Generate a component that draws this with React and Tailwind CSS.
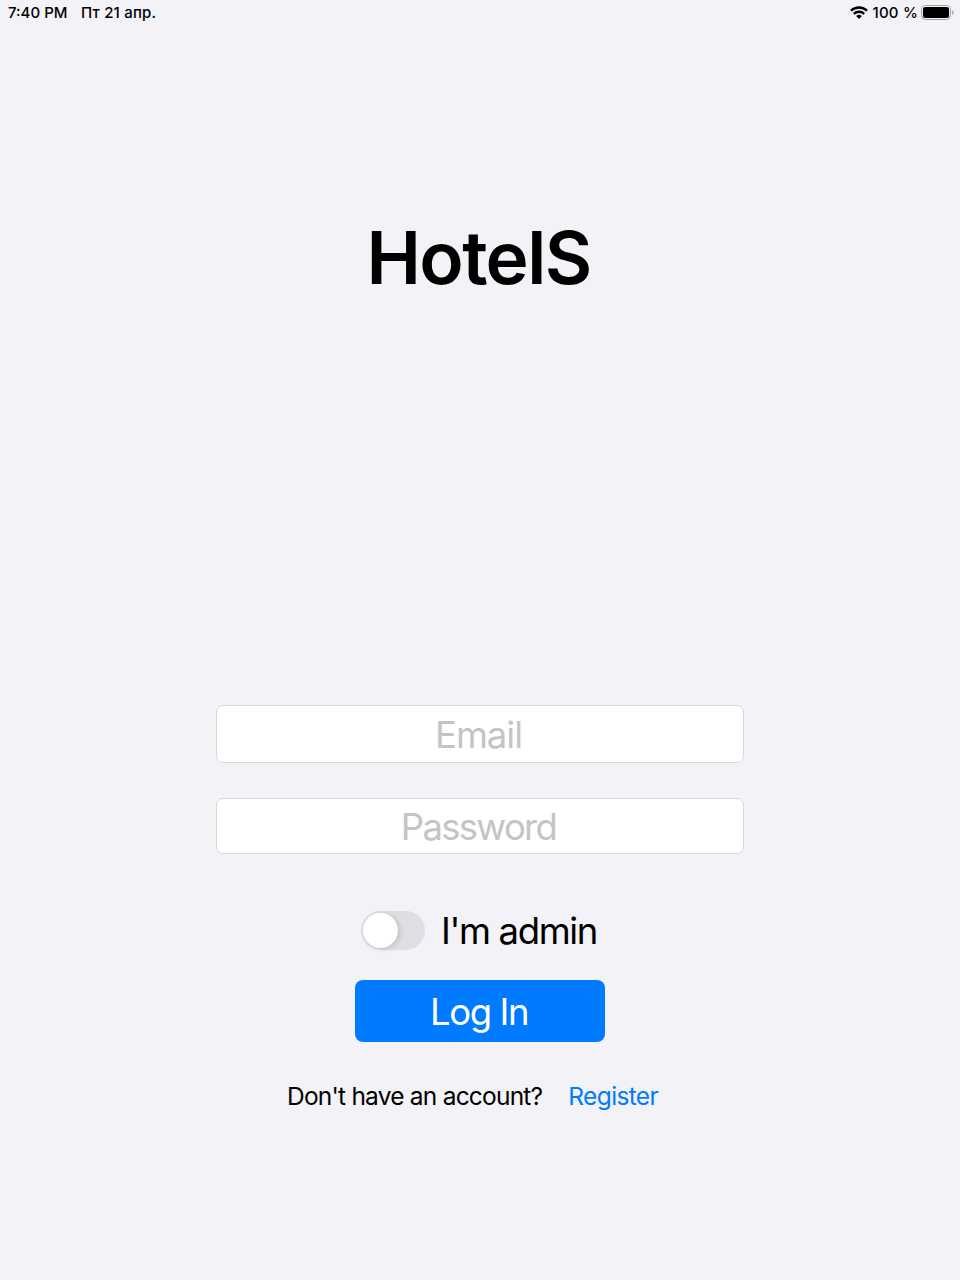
export default function App() {
  return (
    <div className="flex h-[1280px] w-[960px] flex-col items-center overflow-hidden bg-[#f2f2f7] font-['Inter',sans-serif] text-black">
      <header className="flex h-[25px] w-full items-center justify-between pl-2 pr-[6px] text-[15px] leading-none font-medium">
        <div className="flex gap-[13.5px]">
          <span className="whitespace-nowrap">7:40 PM</span>
          <span className="tracking-[0.2px] whitespace-nowrap">Пт 21 апр.</span>
        </div>
        <div className="flex items-center">
          <svg className="mr-[5px]" width="18" height="13" viewBox="0 0 18 13" fill="none" stroke="#000" strokeWidth="2.3">
            <path d="M.9 4.8a11.6 11.6 0 0 1 16.2 0M3.8 7.9a7.4 7.4 0 0 1 10.4 0" />
            <path d="M6.2 10.1a4 4 0 0 1 5.6 0L9 12.9z" fill="#000" stroke="none" />
          </svg>
          <span className="mr-[3px] tracking-[0.2px] whitespace-nowrap">100 %</span>
          <svg width="33" height="15" viewBox="0 0 33 15">
            <rect x=".5" y=".5" width="29" height="14" rx="4" fill="none" stroke="#a0a0a5" />
            <rect x="2" y="2" width="26" height="11" rx="2.5" />
            <path d="M31.2 5q1.5 1 1.5 2.5T31.2 10z" fill="#a0a0a5" />
          </svg>
        </div>
      </header>
      <h1 className="mt-[188px] h-[90px] pr-[3px] text-[73px] leading-[90px] font-semibold tracking-[-1.6px] whitespace-nowrap">HotelS</h1>
      <form className="mt-[402px] flex w-[528px] flex-col items-center">
        <input
          type="email"
          placeholder="Email"
          className="h-[58px] w-full rounded-[7px] border border-[#d9d9dc] bg-white pt-[2px] pr-[3px] text-center text-[36.5px] tracking-[-1px] placeholder:text-[#c4c4c6]"
        />
        <input
          type="password"
          placeholder="Password"
          className="mt-[35px] h-[56px] w-full rounded-[7px] border border-[#d9d9dc] bg-white pt-[2px] pr-[3px] text-center text-[36.5px] tracking-[-1.7px] placeholder:text-[#c4c4c6]"
        />
        <div className="mt-[56px] mr-[2px] flex h-[40px] items-center gap-4 text-[36.5px]">
          <span className="flex h-[39px] w-[64px] items-center rounded-full bg-[#dfdfe3] pl-[2px]">
            <span className="size-[35px] rounded-full bg-white shadow-[2px_1px_5px_rgba(0,0,0,0.14)]" />
          </span>
          <span className="pt-[2px] tracking-[-1.35px] whitespace-nowrap">I'm admin</span>
        </div>
        <button type="button" className="mt-[30px] h-[62px] w-[250px] rounded-[8px] bg-[#007aff] pt-[3px] pr-[2px] text-[36.5px] tracking-[-1.4px] text-white">Log In</button>
      </form>
      <footer className="mt-[38px] flex h-8 w-[386px] items-center gap-[26px] text-[24.5px] whitespace-nowrap">
        <span className="tracking-[-0.78px]">Don't have an account?</span>
        <a className="tracking-[-0.65px] text-[#007aff]">Register</a>
      </footer>
    </div>
  );
}
